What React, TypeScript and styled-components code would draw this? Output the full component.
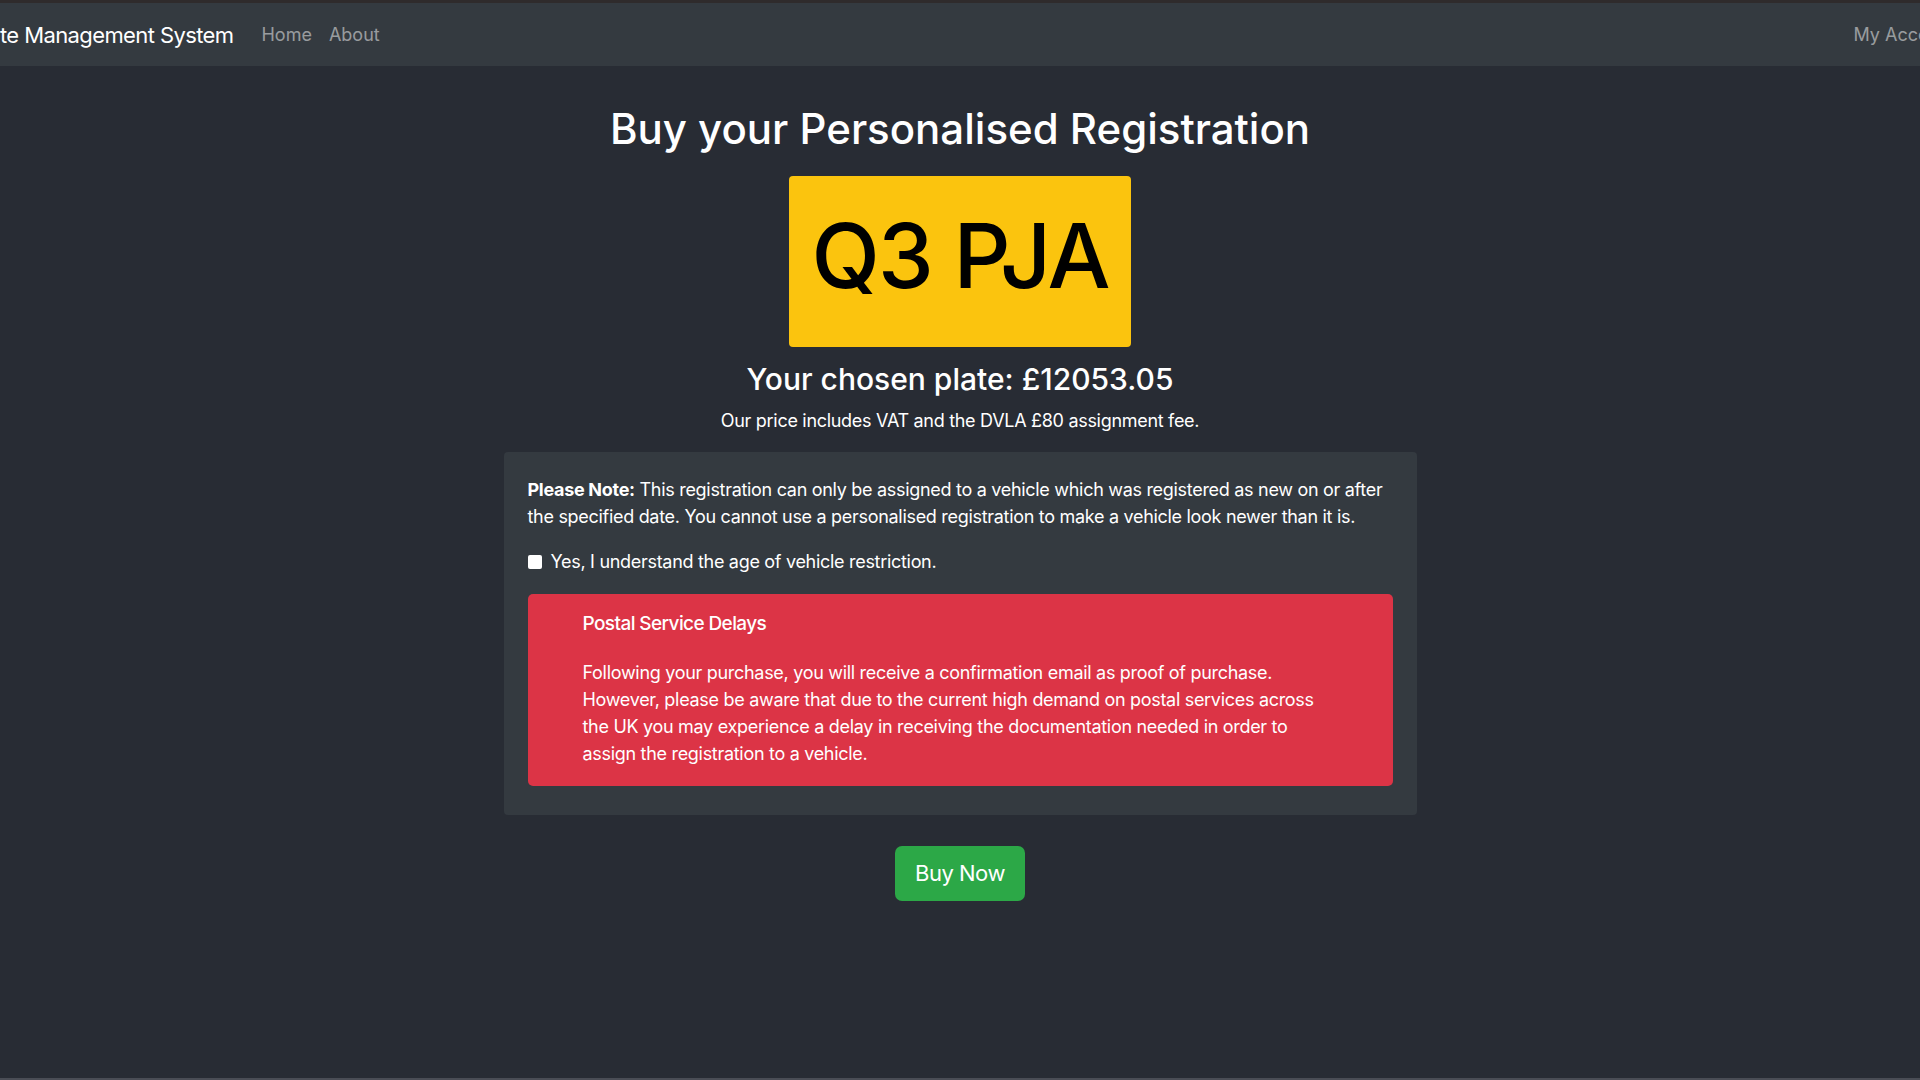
import React from "react";
import styled, { createGlobalStyle } from "styled-components";

const GlobalStyle = createGlobalStyle`
  html, body {
    margin: 0;
    padding: 0;
    background: #282c34;
    overflow: hidden;
  }
  body {
    font-family: Inter, "Noto Sans", "Liberation Sans", sans-serif;
    color: #ffffff;
  }
  * { box-sizing: border-box; }
`;

const Page = styled.div`
  min-height: 100vh;
  display: flex;
  flex-direction: column;
  border-bottom: 2px solid #4a4d55;
`;

const Navbar = styled.nav`
  height: 66px;
  border-top: 3px solid #2f2b2c;
  background: #343a40;
  display: flex;
  align-items: center;
  overflow: hidden;
  white-space: nowrap;
`;

const Brand = styled.a`
  font-size: 22px;
  letter-spacing: -0.6px;
  color: #ffffff;
  margin-left: -30px;
  margin-right: 28px;
  text-decoration: none;
`;

const NavLinks = styled.div`
  display: flex;
  gap: 17px;
  flex: 1;
`;

const NavLink = styled.a`
  font-size: 18px;
  color: rgba(255, 255, 255, 0.5);
  text-decoration: none;
`;

const AccountLink = styled(NavLink)`
  margin-right: -36px;
`;

const Main = styled.main`
  display: flex;
  flex-direction: column;
  align-items: center;
  text-align: center;
`;

const Title = styled.h1`
  font-size: 42px;
  font-weight: 500;
  line-height: 1.2;
  margin: 38px 0 22px;
`;

const Plate = styled.div`
  width: 342px;
  height: 171px;
  padding-top: 27px;
  background: #fbc40e;
  border-radius: 4px;
  color: #000000;
  font-size: 89px;
  font-weight: 500;
  letter-spacing: -2px;
  line-height: 1.2;
`;

const Price = styled.h3`
  font-size: 30px;
  font-weight: 500;
  line-height: 1.2;
  margin: 14px 0 10px;
`;

const BodyText = styled.p`
  font-size: 18px;
  line-height: 27px;
  letter-spacing: -0.3px;
  margin: 0;
`;

const PriceNote = styled(BodyText)`
  margin-bottom: 18px;
`;

const Card = styled.section`
  width: 913px;
  background: #343a40;
  border-radius: 4px;
  padding: 24px 24px 29px;
  text-align: left;
`;

const NoteText = styled(BodyText)`
  margin-bottom: 18px;
`;

const CheckRow = styled.label`
  display: flex;
  align-items: center;
  gap: 9px;
  font-size: 18px;
  line-height: 27px;
  letter-spacing: -0.3px;
  margin-bottom: 19px;
`;

const CheckBox = styled.span`
  width: 14px;
  height: 14px;
  background: #ffffff;
  border-radius: 2px;
  flex-shrink: 0;
`;

const Alert = styled.div`
  background: #dc3446;
  border-radius: 5px;
  padding: 19px 55px 19px;
`;

const AlertTitle = styled.h5`
  font-size: 19px;
  font-weight: 500;
  letter-spacing: -0.6px;
  line-height: 1.2;
  margin: 0 0 23px;
`;

const BuyButton = styled.button`
  margin-top: 31px;
  background: #2ca847;
  color: #ffffff;
  border: none;
  border-radius: 7px;
  font-family: inherit;
  font-size: 22px;
  letter-spacing: -0.5px;
  line-height: 35px;
  padding: 10px 20px;
  cursor: pointer;
`;

export default function App() {
  return (
    <>
      <GlobalStyle />
      <Page>
        <Navbar>
          <Brand href="#">Plate Management System</Brand>
          <NavLinks>
            <NavLink href="#">Home</NavLink>
            <NavLink href="#">About</NavLink>
          </NavLinks>
          <AccountLink href="#">My Account</AccountLink>
        </Navbar>
        <Main>
          <Title>Buy your Personalised Registration</Title>
          <Plate>Q3 PJA</Plate>
          <Price>Your chosen plate: £12053.05</Price>
          <PriceNote>Our price includes VAT and the DVLA £80 assignment fee.</PriceNote>
          <Card>
            <NoteText>
              <strong>Please Note:</strong> This registration can only be assigned to a vehicle which was
              registered as new on or after the specified date. You cannot use a personalised
              registration to make a vehicle look newer than it is.
            </NoteText>
            <CheckRow>
              <CheckBox />
              Yes, I understand the age of vehicle restriction.
            </CheckRow>
            <Alert>
              <AlertTitle>Postal Service Delays</AlertTitle>
              <BodyText>
                Following your purchase, you will receive a confirmation email as proof of purchase.
                However, please be aware that due to the current high demand on postal services across
                the UK you may experience a delay in receiving the documentation needed in order to
                assign the registration to a vehicle.
              </BodyText>
            </Alert>
          </Card>
          <BuyButton>Buy Now</BuyButton>
        </Main>
      </Page>
    </>
  );
}
